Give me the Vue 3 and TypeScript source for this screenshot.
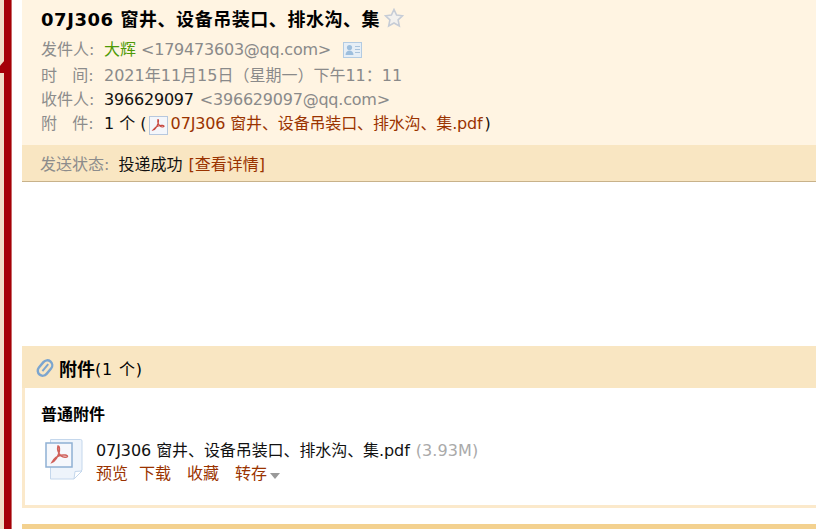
<script setup lang="ts">
const attachName = '07J306 窗井、设备吊装口、排水沟、集.pdf'
</script>

<template>
  <div class="page">
    <div class="rail">
      <div class="notch" />
    </div>
    <main class="mail">
      <section class="head">
        <h1 class="title">
          <span>07J306 窗井、设备吊装口、排水沟、集</span>
          <svg class="star" width="20" height="20" viewBox="0 0 20 20">
            <path d="M10 1.500l2.600 5.600 6 .7-4.500 4.100 1.200 6L10 15l-5.300 2.900 1.200-6L1.400 7.800l6-.7z" fill="#f3f1ee" stroke="#c6ccd6" stroke-width="1.600" />
          </svg>
        </h1>
        <div class="row first">
          <span class="label">发件人:</span>
          <span class="sender">大辉</span>
          <span class="gray addr">&lt;179473603@qq.com&gt;</span>
          <svg class="card" width="19" height="16" viewBox="0 0 19 16">
            <rect x="0.5" y="0.5" width="18" height="15" fill="#e6eef6" stroke="#b3cbe2" />
            <circle cx="6.500" cy="5.500" r="2.600" fill="#9dbedd" />
            <path d="M2.500 13c0-3 2-4.500 4-4.500s4 1.500 4 4.500z" fill="#9dbedd" />
            <path d="M12 4.500h5M12 7.500h5M12 10.500h5" stroke="#a9c3dc" />
          </svg>
        </div>
        <div class="row">
          <span class="label">时&nbsp;&nbsp;&nbsp;间:</span>
          <span class="gray">2021年11月15日（星期一）下午11：11</span>
        </div>
        <div class="row">
          <span class="label">收件人:</span>
          <span class="dark num">396629097</span>
          <span class="gray addr">&lt;396629097@qq.com&gt;</span>
        </div>
        <div class="row">
          <span class="label">附&nbsp;&nbsp;&nbsp;件:</span>
          <span class="dark">1 个 (</span>
          <svg class="pdf-small" width="19" height="19" viewBox="0 0 19 19">
            <rect x="0.5" y="0.5" width="18" height="18" fill="#f4f6fa" stroke="#b7c8de" />
            <path d="M9 3.500c-.8 3 .5 5 2 6.500 1.500 1 3.500 1 4 .3.200-1-2.500-1.200-4.500-.8-2.500.6-5 2.200-6.500 4.500 2-.5 4-3.500 5-6.500.4-1.500.800-4 0-4.000z" fill="none" stroke="#c84a42" stroke-width="1.200" />
          </svg>
          <a class="link tight">{{ attachName }}</a>
          <span class="dark close">)</span>
        </div>
      </section>
      <section class="status">
        <span class="status-label">发送状态:</span>
        <span class="dark">投递成功</span>
        <a class="link">[查看详情]</a>
      </section>

      <div class="body-space" />

      <section class="attach">
        <header class="attach-head">
          <svg class="clip" width="18" height="20" viewBox="0 0 18 20">
            <g transform="rotate(40 9 10)">
              <rect x="4" y="1.500" width="10" height="17" rx="5" fill="none" stroke="#7ba5cf" stroke-width="2.400" />
              <path d="M9 5v9" stroke="#7ba5cf" stroke-width="2" />
            </g>
          </svg>
          <b>附件</b><span class="count">(1 个)</span>
        </header>
        <div class="attach-box">
          <h2 class="attach-kind">普通附件</h2>
          <div class="file">
            <svg class="pdf-big" width="38" height="41" viewBox="0 0 38 41">
              <path d="M5.500 .5h30a1.500 1.500 0 0 1 1.500 1.500v29l-8 9h-23.500z" fill="#eef4fb" stroke="#c4d7ec" />
              <path d="M29 40l1-7.500 7-.5z" fill="#fff" stroke="#c4d7ec" />
              <rect x="1" y="4" width="26" height="24" fill="#f6f8fc" stroke="#8fb0d4" stroke-width="1.500" />
              <path d="M13 7c-1 4 .5 7.500 3 10 2.500 1.800 6 1.500 6.500.5.300-1.500-4-2-7-1.200-3.500.9-6.500 3.500-8.500 7 3-1 6-5.500 7-9.500.6-2.500.8-6.800-1-6.800z" fill="none" stroke="#d0605a" stroke-width="1.500" />
            </svg>
            <div class="file-info">
              <div class="file-name">
                <span class="dark name">{{ attachName }}</span>
                <span class="size">(3.93M)</span>
              </div>
              <div class="actions">
                <a class="link">预览</a>
                <a class="link first-gap">下载</a>
                <a class="link">收藏</a>
                <a class="link more">转存<i class="caret" /></a>
              </div>
            </div>
          </div>
        </div>
      </section>
      <div class="next-bar" />
    </main>
  </div>
</template>

<style>
html, body {
  margin: 0;
  background: #fff;
  overflow: hidden;
}
</style>

<style scoped>
.page {
  display: flex;
  width: 816px;
  height: 529px;
  overflow: hidden;
  font-family: "DejaVu Sans", "Noto Sans CJK SC", sans-serif;
  font-size: 16px;
  color: #000;
}

.rail {
  position: relative;
  flex: 0 0 22px;
  background: linear-gradient(to right, #f1ddc8 0 4px, #a50008 4px 11px, #c86a6a 11px 12px, #fff 12px);
}

.notch {
  position: absolute;
  left: 0;
  top: 60px;
  width: 5px;
  height: 13px;
  background: #a50008;
  clip-path: polygon(100% 0, 0 45%, 0 100%, 100% 100%);
}

.mail {
  flex: 1;
  min-width: 0;
}

.head {
  height: 145px;
  box-sizing: border-box;
  padding: 5px 0 0 19px;
  background: #fff4e2;
}

.title {
  display: flex;
  align-items: center;
  gap: 4px;
  height: 25px;
  margin: 0 0 8px;
  font-size: 18px;
  font-weight: bold;
  letter-spacing: .55px;
  white-space: nowrap;
}

.row {
  display: flex;
  align-items: baseline;
  height: 24px;
  line-height: 24px;
  white-space: nowrap;
}

.row.first {
  height: 26px;
}

.label {
  flex: 0 0 63px;
  color: #8c8c8c;
}

.status-label {
  color: #8c8c8c;
  margin-right: 3px;
}

.sender {
  color: #4e9a06;
  margin-right: -1px;
}

.gray {
  color: #8a8a8a;
}

.dark {
  color: #111;
}

.num {
  letter-spacing: -.2px;
}

.addr {
  margin-left: 6px;
  letter-spacing: -.22px;
}

.card {
  align-self: flex-start;
  margin: 4px 0 0 12px;
}

.pdf-small {
  align-self: center;
  margin: 2px 3px 0 2px;
}

.link {
  color: #9a3300;
}

.tight {
  letter-spacing: -.15px;
}

.name {
  letter-spacing: -.08px;
}

.close {
  margin-left: 2px;
}

.status {
  display: flex;
  align-items: center;
  gap: 6px;
  height: 37px;
  box-sizing: border-box;
  padding: 0 0 1px 18px;
  background: #f9e6c2;
  border-bottom: 1px solid #c8b28a;
  white-space: nowrap;
}

.body-space {
  height: 164px;
}

.attach-head {
  display: flex;
  align-items: center;
  height: 42px;
  box-sizing: border-box;
  padding: 1px 0 0 14px;
  background: #f9e6c2;
}

.clip {
  margin-right: 5px;
}

.attach-head b {
  font-size: 18px;
}

.count {
  font-size: 16px;
  letter-spacing: .8px;
}

.attach-box {
  height: 120px;
  box-sizing: border-box;
  padding: 16px 0 0 16px;
  border: 3px solid #fbe9cb;
  border-top: 0;
  border-right: 0;
  background: #fff;
}

.attach-kind {
  margin: 0 0 13px;
  font-size: 16px;
  font-weight: bold;
  line-height: 22px;
}

.file {
  display: flex;
  gap: 13px;
  padding-left: 4px;
}

.file-name {
  line-height: 24px;
  white-space: nowrap;
}

.size {
  color: #aaa;
  margin-left: 6px;
  letter-spacing: .1px;
}

.actions {
  display: flex;
  gap: 16px;
  line-height: 22px;
}

.first-gap {
  margin-left: -5px;
}

.more {
  display: inline-flex;
  align-items: center;
}

.caret {
  width: 0;
  height: 0;
  margin: 3px 0 0 3px;
  border: 5px solid transparent;
  border-top: 6px solid #999;
  border-bottom: 0;
}

.next-bar {
  height: 10px;
  margin-top: 16px;
  background: #f3d18f;
}
</style>
